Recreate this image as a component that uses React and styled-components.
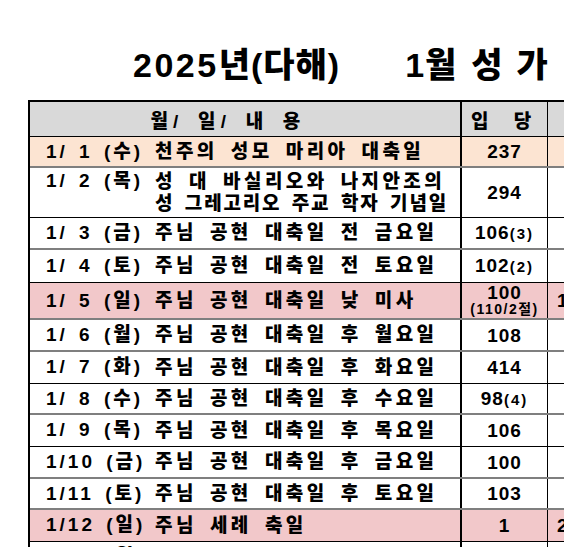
import styled, { createGlobalStyle } from "styled-components";

const GlobalStyle = createGlobalStyle`
  html, body {
    margin: 0;
    padding: 0;
    background: #ffffff;
    overflow: hidden;
  }
  body {
    font-family: "Liberation Sans", "Noto Sans CJK KR", sans-serif;
    color: #000;
  }
`;

const Page = styled.div`
  width: 720px;
  padding-top: 47px;
`;

const Title = styled.h1`
  display: flex;
  margin: 0 0 17px 133px;
  font-size: 34px;
  font-weight: 900;
  line-height: 36px;
  letter-spacing: 1px;
  white-space: pre;
`;

const TitlePart = styled.span`
  margin-left: ${(p) => p.$gap || 0}px;
  letter-spacing: ${(p) => p.$ls || 1}px;
`;

const Year = styled.span`
  letter-spacing: 2.5px;
`;

const Sheet = styled.div`
  margin-left: 28px;
  border-top: 2px solid #000;
  border-left: 2px solid #000;
`;

const Row = styled.div`
  display: grid;
  grid-template-columns: 432px 86px 30px 120px;
  height: ${(p) => p.$h}px;
  background: ${(p) => p.$bg || "#ffffff"};
  border-bottom: ${(p) =>
    p.$line === "gray" ? "2px solid #7f7f7f" : "1px solid #000"};
  box-sizing: border-box;
`;

const Cell = styled.div`
  display: flex;
  align-items: center;
  justify-content: ${(p) => (p.$center ? "center" : "flex-start")};
  border-right: ${(p) => (p.$thick ? "2px" : "1px")} solid #000;
  padding-left: ${(p) => p.$pl || 0}px;
  padding-right: ${(p) => p.$pr || 0}px;
  font-weight: 900;
  font-size: 19px;
  overflow: hidden;
  white-space: nowrap;
`;

const HeadText = styled.span`
  letter-spacing: ${(p) => p.$ls}px;
  word-spacing: ${(p) => p.$ws}px;
  white-space: pre;
`;

const DateText = styled.span`
  width: 109px;
  flex: none;
  letter-spacing: 3px;
  word-spacing: 3px;
  white-space: pre;
  align-self: flex-start;
  line-height: ${(p) => p.$lh}px;
`;

const Desc = styled.div`
  display: flex;
  flex-direction: column;
`;

const DescLine = styled.span`
  letter-spacing: ${(p) => p.$ls}px;
  word-spacing: ${(p) => p.$ws}px;
  line-height: 22px;
  white-space: pre;
`;

const Count = styled.div`
  display: flex;
  flex-direction: column;
  align-items: center;
  font-size: 19px;
  line-height: 17px;
  letter-spacing: 1px;
`;

const Small = styled.span`
  font-size: ${(p) => (p.$sub ? 14 : 15)}px;
  font-weight: bold;
  letter-spacing: ${(p) => (p.$sub ? 1.5 : 2)}px;
`;

const rows = [
  { d: "1/ 1 (수)", t: ["천주의 성모 마리아 대축일"], n: "237", bg: "#fce4d2", h: 31, line: "gray" },
  {
    d: "1/ 2 (목)",
    t: ["성 대 바실리오와 나지안조의", "성 그레고리오 주교 학자 기념일"],
    n: "294",
    h: 50,
    line: "black",
    tight: true,
  },
  { d: "1/ 3 (금)", t: ["주님 공현 대축일 전 금요일"], n: "106", s: "(3)", h: 32, line: "gray" },
  { d: "1/ 4 (토)", t: ["주님 공현 대축일 전 토요일"], n: "102", s: "(2)", h: 33, line: "black" },
  { d: "1/ 5 (일)", t: ["주님 공현 대축일 낮 미사"], n: "100", sub: "(110/2절)", bg: "#f2c8ca", h: 37, line: "gray", x: "1" },
  { d: "1/ 6 (월)", t: ["주님 공현 대축일 후 월요일"], n: "108", h: 32, line: "gray" },
  { d: "1/ 7 (화)", t: ["주님 공현 대축일 후 화요일"], n: "414", h: 32, line: "black" },
  { d: "1/ 8 (수)", t: ["주님 공현 대축일 후 수요일"], n: "98", s: "(4)", h: 31, line: "gray" },
  { d: "1/ 9 (목)", t: ["주님 공현 대축일 후 목요일"], n: "106", h: 32, line: "black" },
  { d: "1/10 (금)", t: ["주님 공현 대축일 후 금요일"], n: "100", h: 32, line: "gray" },
  { d: "1/11 (토)", t: ["주님 공현 대축일 후 토요일"], n: "103", h: 31, line: "gray" },
  { d: "1/12 (일)", t: ["주님 세례 축일"], n: "1", bg: "#f2c8ca", h: 32, line: "black", x: "2" },
  { d: "1/13 (월)", t: ["연중 제1주간 월요일"], n: "35", h: 32, line: "black" },
];

export default function App() {
  return (
    <>
      <GlobalStyle />
      <Page>
        <Title>
          <TitlePart>
            <Year>2025</Year>년(다해)
          </TitlePart>
          <TitlePart $gap={65}>1월</TitlePart>
          <TitlePart $gap={14} $ls={14}>
            성가
          </TitlePart>
        </Title>
        <Sheet>
          <Row $h={35} $bg="#d9d9d9" $line="black">
            <Cell $center $thick $pr={34}>
              <HeadText $ls={5.2} $ws={4}>{"월/ 일/ 내 용"}</HeadText>
            </Cell>
            <Cell $center>
              <HeadText $ls={7} $ws={6}>{"입 당"}</HeadText>
            </Cell>
            <Cell />
            <Cell />
          </Row>
          {rows.map((r) => (
            <Row key={r.d} $h={r.h} $bg={r.bg} $line={r.line}>
              <Cell $thick $pl={16}>
                <DateText $lh={r.h > 40 ? 26 : r.h - 2}>{r.d}</DateText>
                <Desc>
                  {r.t.map((line, i) => (
                    <DescLine
                      key={line}
                      $ls={r.tight && i === 1 ? 1.8 : 3.4}
                      $ws={r.tight && i === 1 ? 3.5 : 4.5}
                    >
                      {line}
                    </DescLine>
                  ))}
                </Desc>
              </Cell>
              <Cell $center>
                <Count>
                  <span>
                    {r.n}
                    {r.s && <Small>{r.s}</Small>}
                  </span>
                  {r.sub && <Small $sub>{r.sub}</Small>}
                </Count>
              </Cell>
              <Cell $pl={9}>{r.x}</Cell>
              <Cell />
            </Row>
          ))}
        </Sheet>
      </Page>
    </>
  );
}
